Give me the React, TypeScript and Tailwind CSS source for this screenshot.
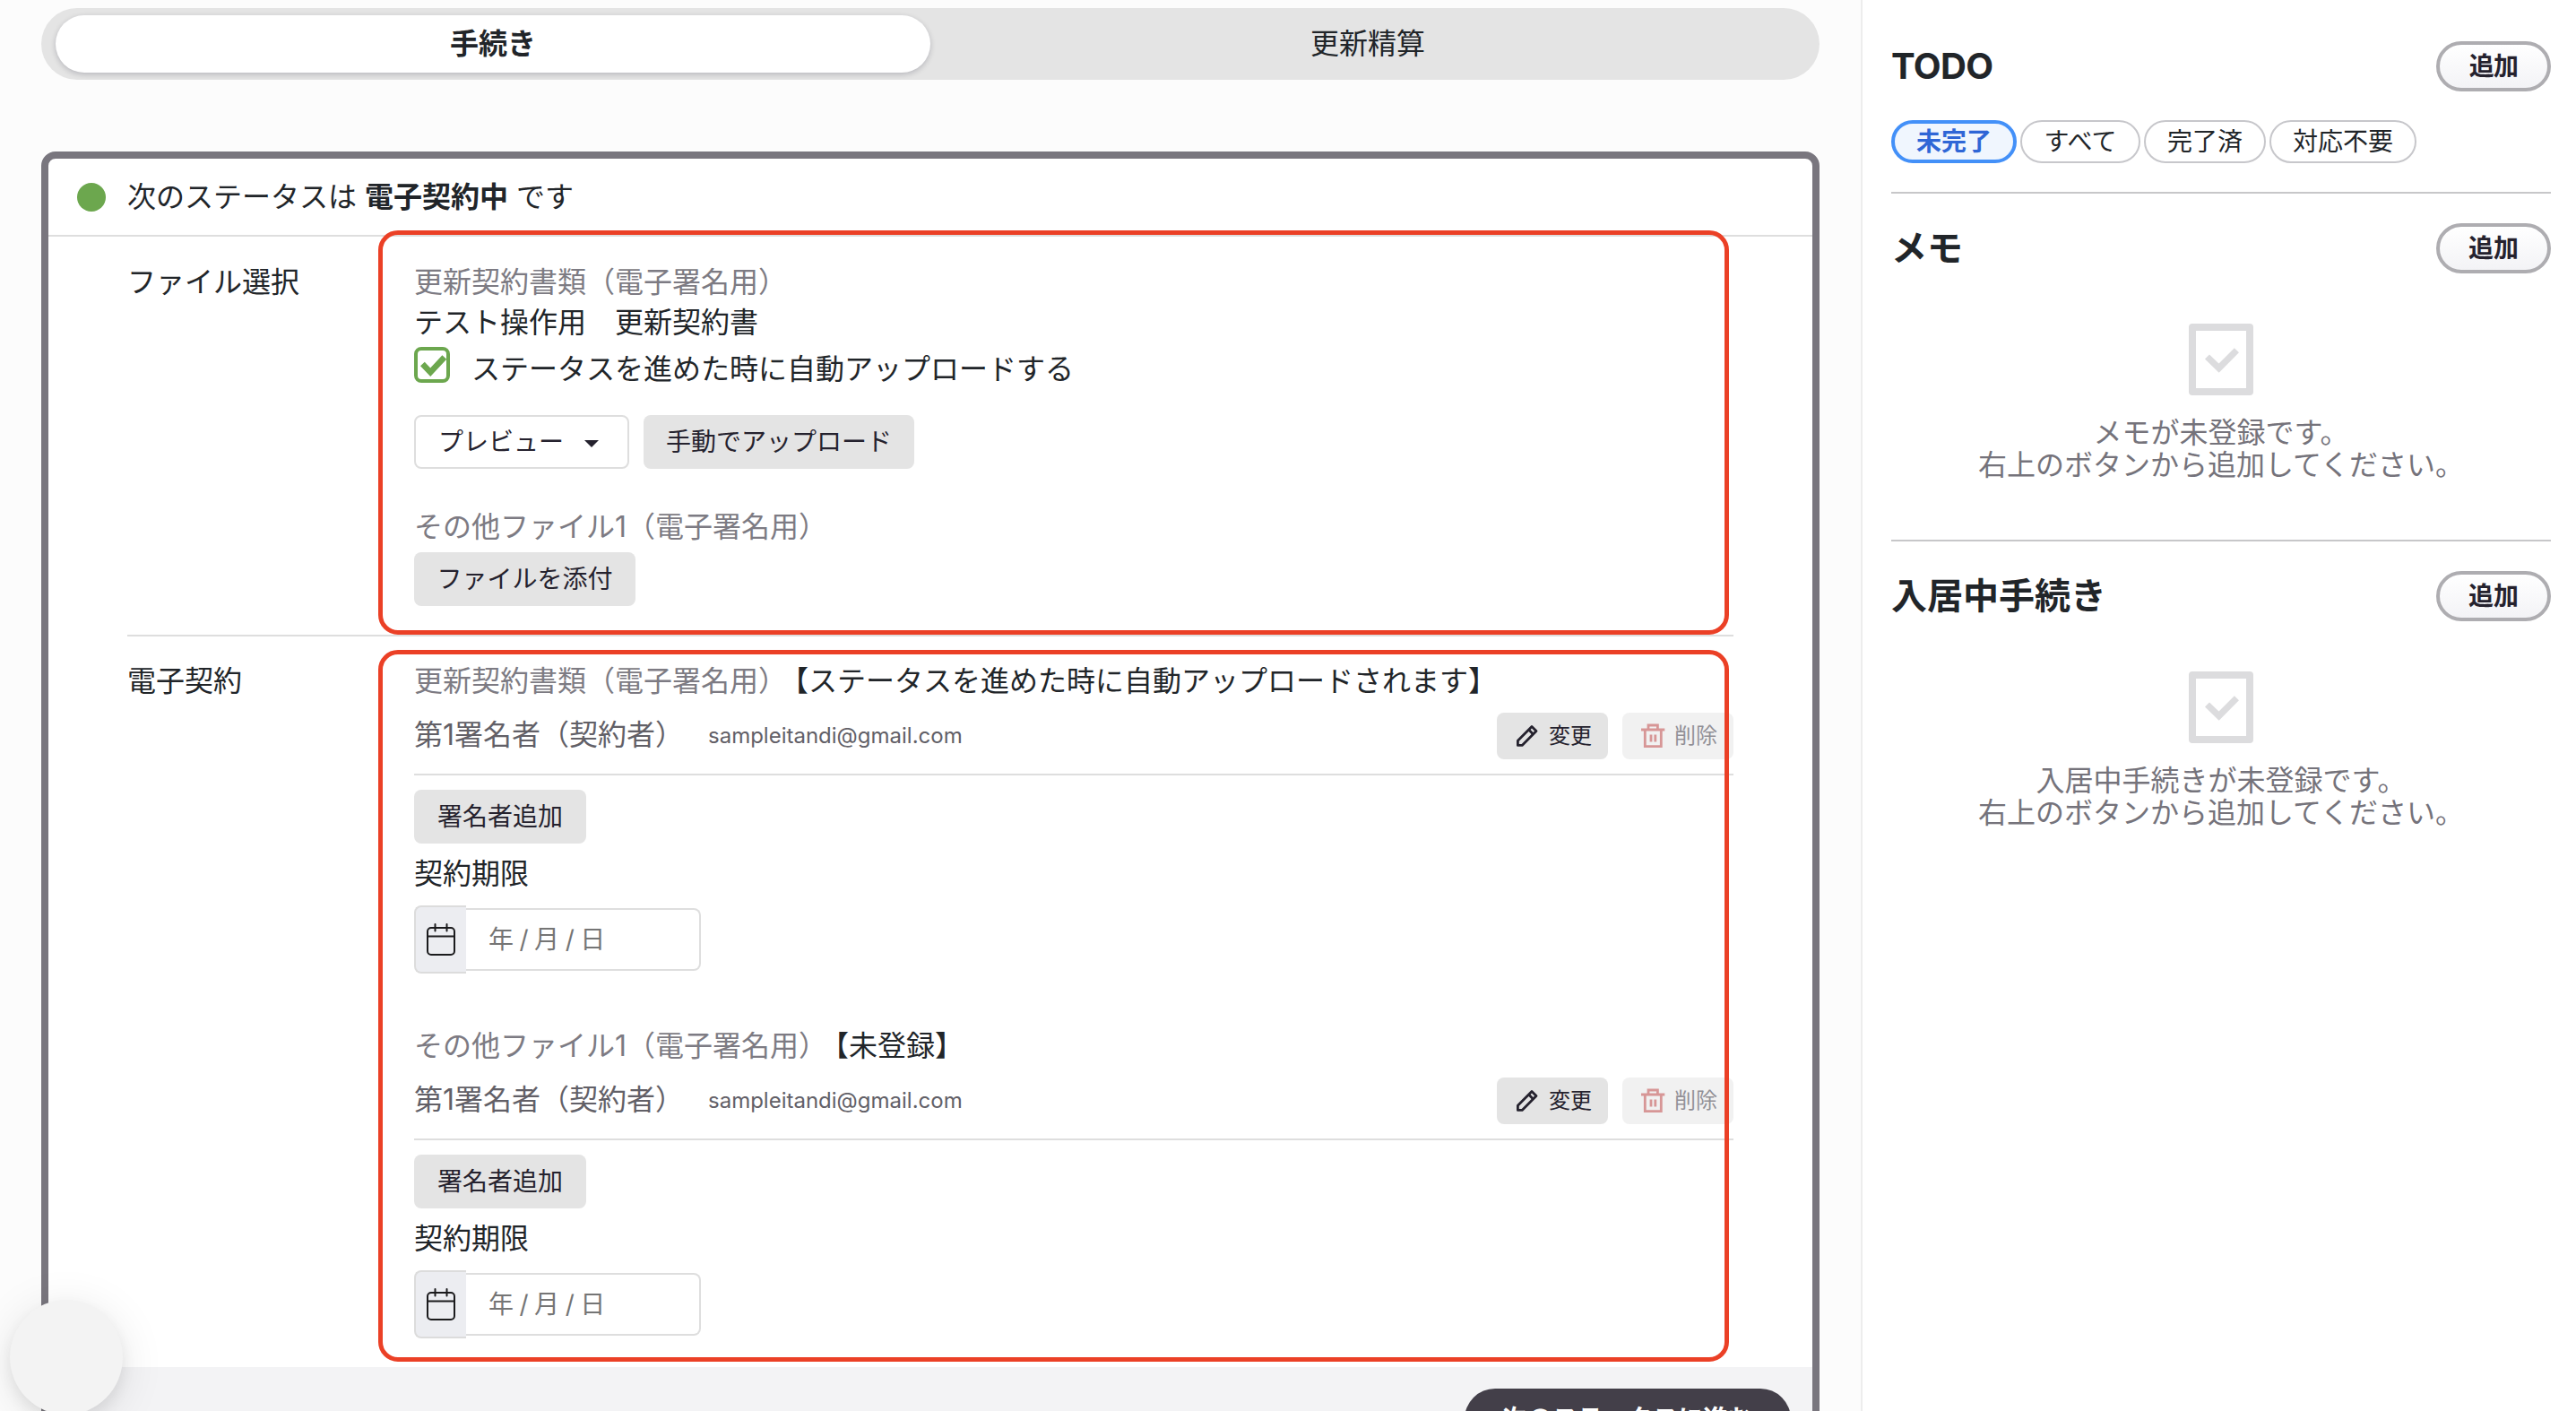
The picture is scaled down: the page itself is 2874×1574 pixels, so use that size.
import { ReactNode } from "react";

const SIGNER_EMAIL = "sampleitandi@gmail.com";

interface EnvelopeProps {
  title: string;
  note: string;
  className?: string;
}

function PencilIcon() {
  return (
    <svg
      className="h-[26px] w-[26px] shrink-0"
      viewBox="0 0 26 26"
      fill="none"
      stroke="currentColor"
      strokeWidth={2.8}
      strokeLinejoin="round"
    >
      <path d="M3.4 23.4V18.2L19 2.6l5 4.9L8.2 23.4z" />
      <path d="M15.6 6l4.9 4.9" />
    </svg>
  );
}

function TrashIcon() {
  return (
    <svg
      className="h-7 w-7 shrink-0 text-[#b03030]"
      viewBox="0 0 28 28"
      fill="none"
      stroke="currentColor"
      strokeWidth={2.8}
    >
      <path d="M1 7h26.3M9 6.5V2h10.4v4.5M5.3 7v18.7h18V7M12 12.5v8M16.8 12.5v8" />
    </svg>
  );
}

function CalendarIcon() {
  return (
    <svg
      className="h-9 w-8"
      viewBox="0 0 32 36"
      fill="none"
      stroke="#1b1b1d"
      strokeWidth={2}
      strokeLinecap="round"
    >
      <rect x="1" y="5" width="30" height="30" rx="4" />
      <path d="M1 14.5h30M9.5 1v7.5M22.5 1v7.5" />
    </svg>
  );
}

function GrayButton({
  children,
  className,
}: {
  children: ReactNode;
  className: string;
}) {
  return (
    <button
      type="button"
      className={`flex h-[60px] items-center justify-center rounded-lg bg-[#e4e4e4] text-[28px] leading-none text-[#25222e] ${className}`}
    >
      {children}
    </button>
  );
}

function Envelope({ title, note, className = "" }: EnvelopeProps) {
  return (
    <div className={className}>
      <p className="flex leading-[48px]">
        <span className="text-[#7d7b83]">{title}</span>
        <span className="-ml-2">{note}</span>
      </p>
      <div className="mt-[11px] flex h-[70px] items-start border-b-2 border-[#dedede] text-[#626067]">
        <span className="w-[328px] leading-[50px]">第1署名者（契約者）</span>
        <span className="text-2xl leading-[52px]">{SIGNER_EMAIL}</span>
        <div className="ml-auto flex gap-4 text-2xl leading-none text-[#25222e]">
          <button
            type="button"
            className="flex h-[52px] w-[124px] items-center gap-3 rounded-lg bg-[#e4e4e4] pl-5"
          >
            <PencilIcon />
            変更
          </button>
          <button
            type="button"
            disabled
            className="flex h-[52px] w-[124px] items-center gap-2.5 rounded-lg bg-[#e4e4e4] pl-5 opacity-50"
          >
            <TrashIcon />
            削除
          </button>
        </div>
      </div>
      <GrayButton className="mt-4 w-[192px]">署名者追加</GrayButton>
      <p className="mt-2.5 leading-[48px]">契約期限</p>
      <div className="mt-[11px] flex items-center">
        <div className="flex h-[76px] w-[58px] items-center justify-center rounded-l-lg border-2 border-r-0 border-[#dcdcdc] bg-[#ecedf1]">
          <CalendarIcon />
        </div>
        <div className="flex h-[70px] w-[262px] items-center gap-[6.5px] rounded-r-lg border-2 border-l-0 border-[#dedede] pl-[25px] text-[28px] leading-none text-[#757575]">
          <span>年</span>
          <span>/</span>
          <span>月</span>
          <span>/</span>
          <span>日</span>
        </div>
      </div>
    </div>
  );
}

function AddButton() {
  return (
    <button
      type="button"
      className="flex h-14 w-32 items-center justify-center rounded-full border-4 border-[#aeadb1] bg-linear-to-b from-white to-[#f3f3f6] text-[28px] leading-none font-bold text-[#25222e]"
    >
      追加
    </button>
  );
}

function SideHeader({ title }: { title: string }) {
  return (
    <div className="flex h-14 items-center justify-between">
      <h2 className="text-[40px] leading-none font-bold">{title}</h2>
      <AddButton />
    </div>
  );
}

function EmptyState({ name }: { name: string }) {
  return (
    <div className="mt-14 flex flex-col items-center text-[#75737b]">
      <div className="flex h-20 w-[72px] items-center justify-center rounded-sm border-8 border-[#dcdcde]">
        <svg className="mt-0.5 ml-0.5 h-7 w-[38px]" viewBox="0 0 38 28" fill="none">
          <path d="M2.5 10L15.6 22.6L35.4 2.7" stroke="#dcdcde" strokeWidth={7.2} />
        </svg>
      </div>
      <p className="mt-6 text-center leading-9">
        {name}が未登録です。
        <br />
        右上のボタンから追加してください。
      </p>
    </div>
  );
}

export default function App() {
  return (
    <div className="relative flex h-[1574px] w-[2874px] overflow-hidden bg-[#fcfcfc] font-['Inter','Noto_Sans_CJK_JP',sans-serif] text-[32px] text-[#212529]">
      <main className="w-[2076px] shrink-0 pt-[9px] pl-[46px]">
        <div className="flex h-20 w-[1984px] rounded-full bg-[#e4e4e4] px-4 py-2 leading-none">
          <button
            type="button"
            className="flex-1 rounded-full bg-white font-bold shadow-[0_2px_6px_rgba(0,0,30,0.2)]"
          >
            手続き
          </button>
          <button type="button" className="flex-1">
            更新精算
          </button>
        </div>

        <div className="mt-20 w-[1984px] rounded-2xl border-8 border-[#79767e] bg-white">
          <div className="flex h-[87px] items-center gap-6 border-b-2 border-[#dedede] pl-8">
            <span className="h-8 w-8 rounded-full bg-[#6ca74e]" />
            <p className="leading-none">
              次のステータスは <b>電子契約中</b> です
            </p>
          </div>

          <section className="relative ml-[88px] flex h-[446px] w-[1792px] border-b-2 border-[#dedede] pt-7">
            <h3 className="w-80 shrink-0 leading-[45px]">ファイル選択</h3>
            <div className="flex-1">
              <p className="leading-[45px] text-[#7d7b83]">
                更新契約書類（電子署名用）
              </p>
              <p className="leading-[45px]">テスト操作用　更新契約書</p>
              <label className="mt-[5px] flex h-10 gap-6">
                <span className="flex h-10 w-10 items-center justify-center rounded-lg border-4 border-[#6ca74e]">
                  <svg className="mt-0.5 ml-0.5 h-6 w-[29px]" viewBox="0 0 29 24" fill="none">
                    <path d="M2.4 10L11.2 19.2L26.8 2.4" stroke="#6ca74e" strokeWidth={6.6} />
                  </svg>
                </span>
                <span className="leading-[50px]">
                  ステータスを進めた時に自動アップロードする
                </span>
              </label>
              <div className="mt-9 flex gap-4">
                <button
                  type="button"
                  className="flex h-[60px] w-60 items-center gap-[23px] rounded-lg border-2 border-[#dedede] pl-[25px] text-[28px] leading-none text-[#25222e]"
                >
                  プレビュー
                  <span className="mt-1 border-x-8 border-t-8 border-x-transparent border-t-[#25222e]" />
                </button>
                <GrayButton className="w-[302px]">
                  手動でアップロード
                </GrayButton>
              </div>
              <p className="mt-[42px] leading-[46px] text-[#7d7b83]">
                その他ファイル1（電子署名用）
              </p>
              <GrayButton className="mt-[5px] w-[247px]">
                ファイルを添付
              </GrayButton>
            </div>
            <div className="pointer-events-none absolute -top-[7px] left-[280px] h-[451px] w-[1507px] rounded-[22px] border-5 border-[#eb4026]" />
          </section>

          <section className="relative ml-[88px] flex w-[1792px] pt-[26px] pb-8">
            <h3 className="w-80 shrink-0 leading-[48px]">電子契約</h3>
            <div className="flex-1">
              <Envelope
                title="更新契約書類（電子署名用）"
                note="【ステータスを進めた時に自動アップロードされます】"
              />
              <Envelope
                className="mt-[57px]"
                title="その他ファイル1（電子署名用）"
                note="【未登録】"
              />
            </div>
            <div className="pointer-events-none absolute top-[15px] left-[280px] h-[794px] w-[1507px] rounded-[22px] border-5 border-[#eb4026]" />
          </section>

          <footer className="flex h-[116px] justify-end bg-[#f3f3f5] pt-6 pr-6">
            <button
              type="button"
              className="h-[68px] w-[364px] rounded-full bg-[#433f49] text-[28px] leading-none font-bold text-white"
            >
              次のステータスに進む
            </button>
          </footer>
        </div>
      </main>

      <aside className="flex-1 border-l-2 border-[#ededed] bg-white pt-[46px] pr-7 pl-8">
        <div className="tracking-[-0.02em]">
          <SideHeader title="TODO" />
        </div>
        <div className="mt-8 flex h-12 gap-1 text-[28px] leading-none">
          <button
            type="button"
            className="w-[140px] rounded-full border-4 border-[#4390f8] bg-[#f0f6fe] font-bold text-[#2f66d6]"
          >
            未完了
          </button>
          <button
            type="button"
            className="w-[134px] rounded-full border-2 border-[#c7c7cb]"
          >
            すべて
          </button>
          <button
            type="button"
            className="w-[136px] rounded-full border-2 border-[#c7c7cb]"
          >
            完了済
          </button>
          <button
            type="button"
            className="w-[164px] rounded-full border-2 border-[#c7c7cb]"
          >
            対応不要
          </button>
        </div>
        <div className="mt-8 h-[390px] border-y-2 border-[#c7c7c9] pt-[33px]">
          <SideHeader title="メモ" />
          <EmptyState name="メモ" />
        </div>
        <div className="pt-[33px]">
          <SideHeader title="入居中手続き" />
          <EmptyState name="入居中手続き" />
        </div>
      </aside>

      {/* floating launcher */}
      <div className="absolute top-[1450px] left-[11px] h-32 w-[126px] rounded-[50%] bg-[#f3f3f3] shadow-[0_8px_50px_rgba(0,0,0,0.1),0_8px_16px_rgba(0,0,0,0.07)]" />
    </div>
  );
}
